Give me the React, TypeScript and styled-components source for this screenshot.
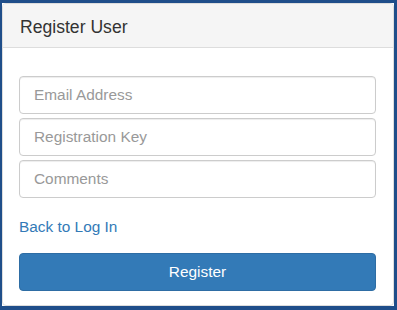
import styled, { createGlobalStyle } from "styled-components";

const GlobalStyle = createGlobalStyle`
  html, body {
    margin: 0;
    padding: 0;
    background: #fff;
  }
  body {
    font-family: "Liberation Sans", Arial, sans-serif;
  }
`;

const Frame = styled.div`
  box-sizing: border-box;
  width: 397px;
  height: 310px;
  border-style: solid;
  border-color: #1f4e8a;
  border-width: 3px 3px 4px 2px;
  background: #fff;
  display: flex;
`;

const Panel = styled.div`
  flex: 1;
  display: flex;
  flex-direction: column;
  border: 1px solid #ddd;
  border-radius: 4px;
  overflow: hidden;
`;

const Heading = styled.div`
  box-sizing: border-box;
  height: 44px;
  padding: 3px 17px 0;
  display: flex;
  align-items: center;
  background: #f5f5f5;
  border-bottom: 1px solid #ddd;
  color: #333;
  font-size: 17.6px;
`;

const Body = styled.form`
  display: flex;
  flex-direction: column;
  padding: 28px 17px 0 16px;
`;

const Input = styled.input`
  box-sizing: border-box;
  height: 38px;
  margin-bottom: 4px;
  padding: 0 14px;
  border: 1px solid #ccc;
  border-radius: 4px;
  box-shadow: inset 0 1px 1px rgba(0, 0, 0, 0.075);
  font-family: inherit;
  font-size: 15.4px;
  color: #555;
  outline: none;
  &::placeholder {
    color: #999;
  }
`;

const Link = styled.a`
  margin-top: 14px;
  color: #337ab7;
  font-size: 15.4px;
  line-height: 22px;
  text-decoration: none;
  align-self: flex-start;
  cursor: pointer;
`;

const Button = styled.button`
  box-sizing: border-box;
  height: 38px;
  margin-top: 15px;
  border: 1px solid #2e6da4;
  border-radius: 4px;
  background: #337ab7;
  color: #fff;
  font-family: inherit;
  font-size: 15.4px;
  cursor: pointer;
`;

function App() {
  return (
    <>
      <GlobalStyle />
      <Frame>
        <Panel>
          <Heading>Register User</Heading>
          <Body onSubmit={(e) => e.preventDefault()}>
            <Input type="email" placeholder="Email Address" />
            <Input type="text" placeholder="Registration Key" />
            <Input type="text" placeholder="Comments" />
            <Link>Back to Log In</Link>
            <Button type="submit">Register</Button>
          </Body>
        </Panel>
      </Frame>
    </>
  );
}

export default App;
